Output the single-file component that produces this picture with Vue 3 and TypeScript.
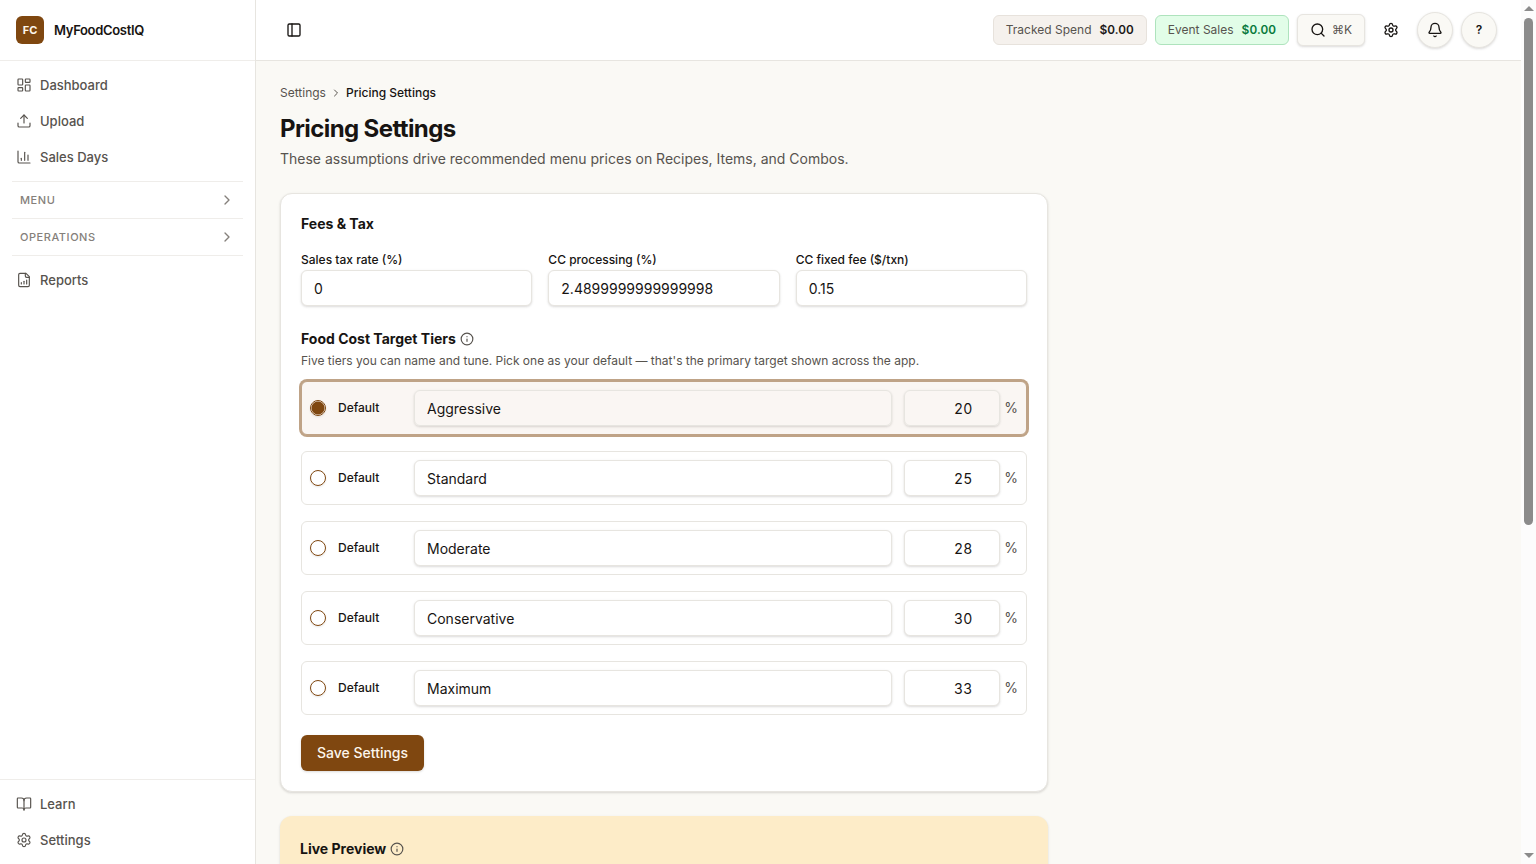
<script setup lang="ts">
import { ref } from 'vue'

interface NavItem {
  label: string
  paths: string[]
}

interface Tier {
  id: string
  name: string
  target: number
}

const gear =
  'M9.671 4.136a2.34 2.34 0 0 1 4.659 0 2.34 2.34 0 0 0 3.319 1.915 2.34 2.34 0 0 1 2.33 4.033 2.34 2.34 0 0 0 0 3.831 2.34 2.34 0 0 1-2.33 4.033 2.34 2.34 0 0 0-3.319 1.915 2.34 2.34 0 0 1-4.659 0 2.34 2.34 0 0 0-3.32-1.915 2.34 2.34 0 0 1-2.33-4.033 2.34 2.34 0 0 0 0-3.831A2.34 2.34 0 0 1 6.35 6.051a2.34 2.34 0 0 0 3.319-1.915'
const gearHub = 'M9 12a3 3 0 1 0 6 0a3 3 0 1 0-6 0'

const mainNav: NavItem[] = [
  {
    label: 'Dashboard',
    paths: [
      'M4 3h5a1 1 0 0 1 1 1v7a1 1 0 0 1-1 1H4a1 1 0 0 1-1-1V4a1 1 0 0 1 1-1z',
      'M15 3h5a1 1 0 0 1 1 1v3a1 1 0 0 1-1 1h-5a1 1 0 0 1-1-1V4a1 1 0 0 1 1-1z',
      'M15 12h5a1 1 0 0 1 1 1v7a1 1 0 0 1-1 1h-5a1 1 0 0 1-1-1v-7a1 1 0 0 1 1-1z',
      'M4 16h5a1 1 0 0 1 1 1v3a1 1 0 0 1-1 1H4a1 1 0 0 1-1-1v-3a1 1 0 0 1 1-1z',
    ],
  },
  {
    label: 'Upload',
    paths: ['M12 3v12', 'm17 8-5-5-5 5', 'M21 15v4a2 2 0 0 1-2 2H5a2 2 0 0 1-2-2v-4'],
  },
  {
    label: 'Sales Days',
    paths: ['M3 3v16a2 2 0 0 0 2 2h16', 'M18 17V9', 'M13 17V5', 'M8 17v-3'],
  },
]

const groups: string[] = ['Menu', 'Operations']

const reportNav: NavItem[] = [
  {
    label: 'Reports',
    paths: [
      'M15 2H6a2 2 0 0 0-2 2v16a2 2 0 0 0 2 2h12a2 2 0 0 0 2-2V7Z',
      'M14 2v4a2 2 0 0 0 2 2h4',
      'M8 18v-2',
      'M12 18v-4',
      'M16 18v-6',
    ],
  },
]

const footerNav: NavItem[] = [
  {
    label: 'Learn',
    paths: [
      'M12 7v14',
      'M3 18a1 1 0 0 1-1-1V4a1 1 0 0 1 1-1h5a4 4 0 0 1 4 4 4 4 0 0 1 4-4h5a1 1 0 0 1 1 1v13a1 1 0 0 1-1 1h-6a3 3 0 0 0-3 3 3 3 0 0 0-3-3z',
    ],
  },
  { label: 'Settings', paths: [gear, gearHub] },
]

const salesTax = ref('0')
const ccRate = ref('2.4899999999999998')
const ccFee = ref('0.15')

const tiers = ref<Tier[]>([
  { id: 'aggressive', name: 'Aggressive', target: 20 },
  { id: 'standard', name: 'Standard', target: 25 },
  { id: 'moderate', name: 'Moderate', target: 28 },
  { id: 'conservative', name: 'Conservative', target: 30 },
  { id: 'maximum', name: 'Maximum', target: 33 },
])
const defaultTier = ref('aggressive')
</script>

<template>
  <div class="shell">
    <aside class="sidebar">
      <div class="brand">
        <span class="brand-mark">FC</span>
        <span class="brand-name">MyFoodCostIQ</span>
      </div>
      <nav class="nav" aria-label="Main">
        <a v-for="item in mainNav" :key="item.label" class="nav-item" href="#">
          <svg class="icon" viewBox="0 0 24 24"><path v-for="d in item.paths" :key="d" :d="d" /></svg>
          {{ item.label }}
        </a>
      </nav>
      <div class="groups">
        <button v-for="g in groups" :key="g" class="group" type="button">
          {{ g }}
          <svg class="icon group-chevron" viewBox="0 0 24 24"><path d="m9 18 6-6-6-6" /></svg>
        </button>
      </div>
      <nav class="nav nav-grow" aria-label="Reports">
        <a v-for="item in reportNav" :key="item.label" class="nav-item" href="#">
          <svg class="icon" viewBox="0 0 24 24"><path v-for="d in item.paths" :key="d" :d="d" /></svg>
          {{ item.label }}
        </a>
      </nav>
      <nav class="nav nav-footer" aria-label="Help and settings">
        <a v-for="item in footerNav" :key="item.label" class="nav-item" href="#">
          <svg class="icon" viewBox="0 0 24 24"><path v-for="d in item.paths" :key="d" :d="d" /></svg>
          {{ item.label }}
        </a>
      </nav>
    </aside>

    <div class="page">
      <header class="topbar">
        <button class="icon-button" type="button" aria-label="Toggle sidebar">
          <svg class="icon" viewBox="0 0 24 24">
            <rect x="3" y="3" width="18" height="18" rx="2" />
            <path d="M9 3v18" />
          </svg>
        </button>
        <div class="actions">
          <div class="pill">Tracked Spend <strong>$0.00</strong></div>
          <div class="pill pill-green">Event Sales <strong>$0.00</strong></div>
          <button class="search" type="button" aria-label="Search">
            <svg class="icon" viewBox="0 0 24 24">
              <circle cx="11" cy="11" r="8" />
              <path d="m21 21-4.3-4.3" />
            </svg>
            <span class="shortcut"><span class="command">⌘</span>K</span>
          </button>
          <button class="icon-button" type="button" aria-label="Settings">
            <svg class="icon" viewBox="0 0 24 24"><path :d="gear" /><path :d="gearHub" /></svg>
          </button>
          <button class="round" type="button" aria-label="Notifications">
            <svg class="icon" viewBox="0 0 24 24">
              <path d="M10.268 21a2 2 0 0 0 3.464 0" />
              <path d="M3.262 15.326A1 1 0 0 0 4 17h16a1 1 0 0 0 .74-1.673C19.41 13.956 18 12.499 18 8A6 6 0 0 0 6 8c0 4.499-1.411 5.956-2.738 7.326" />
            </svg>
          </button>
          <button class="round" type="button" aria-label="Help">?</button>
        </div>
      </header>

      <main class="content">
        <nav class="breadcrumb" aria-label="Breadcrumb">
          <a href="#">Settings</a>
          <svg class="icon crumb-chevron" viewBox="0 0 24 24"><path d="m9 18 6-6-6-6" /></svg>
          <span class="current">Pricing Settings</span>
        </nav>
        <h1>Pricing Settings</h1>
        <p class="lead">These assumptions drive recommended menu prices on Recipes, Items, and Combos.</p>

        <form class="card" @submit.prevent>
          <h2>Fees &amp; Tax</h2>
          <div class="fees">
            <div class="field">
              <label for="tax">Sales tax rate (%)</label>
              <input id="tax" v-model="salesTax" class="input" type="text" inputmode="decimal" />
            </div>
            <div class="field">
              <label for="cc-rate">CC processing (%)</label>
              <input id="cc-rate" v-model="ccRate" class="input" type="text" inputmode="decimal" />
            </div>
            <div class="field">
              <label for="cc-fee">CC fixed fee ($/txn)</label>
              <input id="cc-fee" v-model="ccFee" class="input" type="text" inputmode="decimal" />
            </div>
          </div>

          <h2 class="tiers-title">
            Food Cost Target Tiers
            <svg class="icon info" viewBox="0 0 24 24">
              <circle cx="12" cy="12" r="10" />
              <path d="M12 16v-4" />
              <path d="M12 8h.01" />
            </svg>
          </h2>
          <p class="hint">Five tiers you can name and tune. Pick one as your default — that's the primary target shown across the app.</p>

          <div class="tiers">
            <div v-for="t in tiers" :key="t.id" class="tier" :class="{ selected: defaultTier === t.id }">
              <label class="choice">
                <input v-model="defaultTier" class="radio" type="radio" name="default-tier" :value="t.id" />
                Default
              </label>
              <input v-model="t.name" class="input tier-name" type="text" aria-label="Tier name" />
              <div class="percent">
                <input v-model="t.target" class="input tier-target" type="number" :aria-label="t.name + ' target'" />
                <span>%</span>
              </div>
            </div>
          </div>

          <button class="save" type="submit">Save Settings</button>
        </form>

        <section class="preview">
          <h2>
            Live Preview
            <svg class="icon info" viewBox="0 0 24 24">
              <circle cx="12" cy="12" r="10" />
              <path d="M12 16v-4" />
              <path d="M12 8h.01" />
            </svg>
          </h2>
        </section>
      </main>
    </div>

    <div class="scrollbar" aria-hidden="true">
      <svg class="arrow" viewBox="0 0 10 5"><path d="M0 5 5 0l5 5z" /></svg>
      <div class="track"><div class="thumb"></div></div>
      <svg class="arrow" viewBox="0 0 10 5"><path d="M0 0h10L5 5z" /></svg>
    </div>
  </div>
</template>

<style>
body {
  margin: 0;
}
</style>

<style scoped>
.shell {
  --ink: #1c1917;
  --muted: #57534e;
  --line: #e7e5e0;
  --brand: #7f4710;
  --canvas: #faf9f5;
  --shadow: 0 1px 3px rgba(28, 25, 23, 0.1), 0 1px 2px rgba(28, 25, 23, 0.06);
  display: flex;
  height: 100vh;
  overflow: hidden;
  background: var(--canvas);
  color: #171412;
  font-family: Inter, 'Liberation Sans', sans-serif;
  font-size: 14px;
  line-height: 20px;
}

.shell * {
  box-sizing: border-box;
}

button,
input {
  font: inherit;
  color: inherit;
  margin: 0;
}

button {
  cursor: pointer;
}

a {
  color: inherit;
  text-decoration: none;
}

h1,
h2,
p {
  margin: 0;
}

.icon {
  width: 16px;
  height: 16px;
  flex: none;
  fill: none;
  stroke: currentColor;
  stroke-width: 2;
  stroke-linecap: round;
  stroke-linejoin: round;
}

.sidebar {
  display: flex;
  flex-direction: column;
  flex: none;
  width: 256px;
  background: #fff;
  border-right: 1px solid var(--line);
}

.brand {
  display: flex;
  align-items: center;
  gap: 10px;
  height: 61px;
  padding: 0 16px;
  border-bottom: 1px solid #efedea;
}

.brand-mark {
  display: flex;
  align-items: center;
  justify-content: center;
  width: 28px;
  height: 28px;
  border-radius: 6px;
  background: var(--brand);
  color: #fdf6ec;
  font-size: 11px;
  font-weight: 700;
}

.brand-name {
  font-size: 13px;
  font-weight: 600;
  letter-spacing: -0.025em;
}

.nav {
  display: flex;
  flex-direction: column;
  gap: 4px;
  padding: 8px;
}

.nav-grow {
  flex: 1;
}

.nav-footer {
  border-top: 1px solid #efedea;
}

.nav-item {
  display: flex;
  align-items: center;
  gap: 8px;
  height: 32px;
  padding: 0 8px;
  border-radius: 6px;
  color: var(--muted);
  font-size: 13px;
  font-weight: 500;
}

.nav-item .icon {
  stroke-width: 1.75;
}

.groups {
  margin: 0 12px;
  border-top: 1px solid #efedea;
}

.group {
  display: flex;
  align-items: center;
  justify-content: space-between;
  width: 100%;
  height: 37px;
  padding: 0 8px;
  border: 0;
  border-bottom: 1px solid #efedea;
  background: none;
  color: #85807b;
  font-size: 11px;
  font-weight: 500;
  letter-spacing: 0.05em;
  text-transform: uppercase;
}

.page {
  display: flex;
  flex-direction: column;
  flex: 1;
  min-width: 0;
}

.topbar {
  display: flex;
  flex: none;
  align-items: center;
  justify-content: space-between;
  height: 61px;
  padding: 0 24px 0 20px;
  background: #fff;
  border-bottom: 1px solid var(--line);
}

.icon-button {
  display: flex;
  align-items: center;
  justify-content: center;
  width: 36px;
  height: 36px;
  padding: 0;
  border: 0;
  background: none;
}

.actions {
  display: flex;
  align-items: center;
  gap: 8px;
}

.pill {
  display: flex;
  align-items: center;
  gap: 8px;
  height: 30px;
  padding: 0 12px;
  border: 1px solid #e7e2dc;
  border-radius: 6px;
  background: #f5f1ed;
  color: var(--muted);
  font-size: 12px;
}

.pill strong {
  color: var(--ink);
  font-weight: 600;
  font-variant-numeric: tabular-nums;
}

.pill-green {
  border-color: #aee3bd;
  background: #e2fde8;
}

.pill-green strong {
  color: #087a3c;
}

.search {
  display: flex;
  align-items: center;
  gap: 6px;
  height: 32px;
  padding: 0 12px;
  border: 1px solid var(--line);
  border-radius: 6px;
  background: var(--canvas);
  box-shadow: var(--shadow);
}

.shortcut {
  color: var(--muted);
  font-size: 12px;
}

.command {
  font-family: 'DejaVu Sans', sans-serif;
}

.round {
  display: flex;
  align-items: center;
  justify-content: center;
  width: 36px;
  height: 36px;
  padding: 0;
  border: 1px solid var(--line);
  border-radius: 50%;
  background: var(--canvas);
  box-shadow: var(--shadow);
  font-size: 12px;
  font-weight: 600;
}

.content {
  flex: 1;
  min-height: 0;
  padding: 24px;
  overflow: hidden;
}

.breadcrumb {
  display: flex;
  align-items: center;
  gap: 4px;
  margin-bottom: 12px;
  color: var(--muted);
  font-size: 12px;
  line-height: 16px;
}

.crumb-chevron {
  width: 12px;
  height: 12px;
}

.current {
  color: #171412;
  font-weight: 500;
}

h1 {
  font-size: 24px;
  font-weight: 700;
  line-height: 32px;
  letter-spacing: -0.025em;
}

h2 {
  font-size: 14px;
  font-weight: 700;
  line-height: 20px;
}

.lead {
  margin-top: 4px;
  color: var(--muted);
}

.card {
  max-width: 768px;
  margin-top: 24px;
  padding: 20px;
  border: 1px solid var(--line);
  border-radius: 12px;
  background: #fff;
  box-shadow: var(--shadow);
}

.fees {
  display: grid;
  grid-template-columns: repeat(3, minmax(0, 1fr));
  gap: 16px;
  margin-top: 16px;
}

.field {
  display: flex;
  flex-direction: column;
}

.field label {
  font-size: 12px;
  font-weight: 500;
}

.input {
  width: 100%;
  min-width: 0;
  height: 36px;
  padding: 0 12px;
  border: 1px solid var(--line);
  border-radius: 6px;
  background: transparent;
  box-shadow: var(--shadow);
}

.field .input,
.tier:not(.selected) .input {
  background: #fff;
}

.tiers-title,
.preview h2 {
  display: flex;
  align-items: center;
  gap: 4px;
}

.tiers-title {
  margin-top: 23px;
}

.info {
  width: 14px;
  height: 14px;
  color: var(--muted);
}

.hint {
  margin-top: 4px;
  color: var(--muted);
  font-size: 12px;
  line-height: 16px;
}

.tiers {
  display: flex;
  flex-direction: column;
  gap: 16px;
  margin-top: 12px;
}

.tier {
  display: flex;
  align-items: center;
  gap: 12px;
  padding: 8px;
  border: 1px solid var(--line);
  border-radius: 6px;
}

.tier.selected {
  border-color: #bfa387;
  background: #faf6f3;
  box-shadow: 0 0 0 2px #bfa387;
}

.choice {
  display: flex;
  align-items: center;
  gap: 12px;
  flex: none;
  width: 92px;
  font-size: 12px;
  font-weight: 500;
}

.radio {
  appearance: none;
  width: 16px;
  height: 16px;
  border: 1px solid var(--brand);
  border-radius: 50%;
  box-shadow: 0 1px 2px rgba(28, 25, 23, 0.1);
}

.radio:checked {
  background: radial-gradient(circle, var(--brand) 6px, transparent 7px);
}

.tier-name {
  flex: 1;
}

.percent {
  display: flex;
  align-items: center;
  gap: 4px;
  color: var(--muted);
}

.tier-target {
  width: 96px;
  color: #171412;
  text-align: right;
  font-variant-numeric: tabular-nums;
}

.save {
  display: block;
  height: 36px;
  margin-top: 20px;
  padding: 0 16px;
  border: 0;
  border-radius: 6px;
  background: var(--brand);
  box-shadow: var(--shadow);
  color: #fdf6ec;
  font-weight: 500;
}

.preview {
  max-width: 768px;
  min-height: 240px;
  margin-top: 24px;
  padding: 20px;
  border-radius: 12px;
  background: #fdecc8;
  box-shadow: var(--shadow);
}

.preview h2 {
  line-height: 26px;
}

.scrollbar {
  display: flex;
  flex: none;
  flex-direction: column;
  align-items: center;
  gap: 7px;
  width: 15px;
  padding: 6px 0;
  background: #fcfcfc;
}

.arrow {
  flex: none;
  width: 10px;
  height: 5px;
  fill: #8b8b8b;
}

.track {
  flex: 1;
  width: 9px;
}

.thumb {
  height: calc(61% + 2px);
  border-radius: 5px;
  background: #8b8b8b;
}
</style>
